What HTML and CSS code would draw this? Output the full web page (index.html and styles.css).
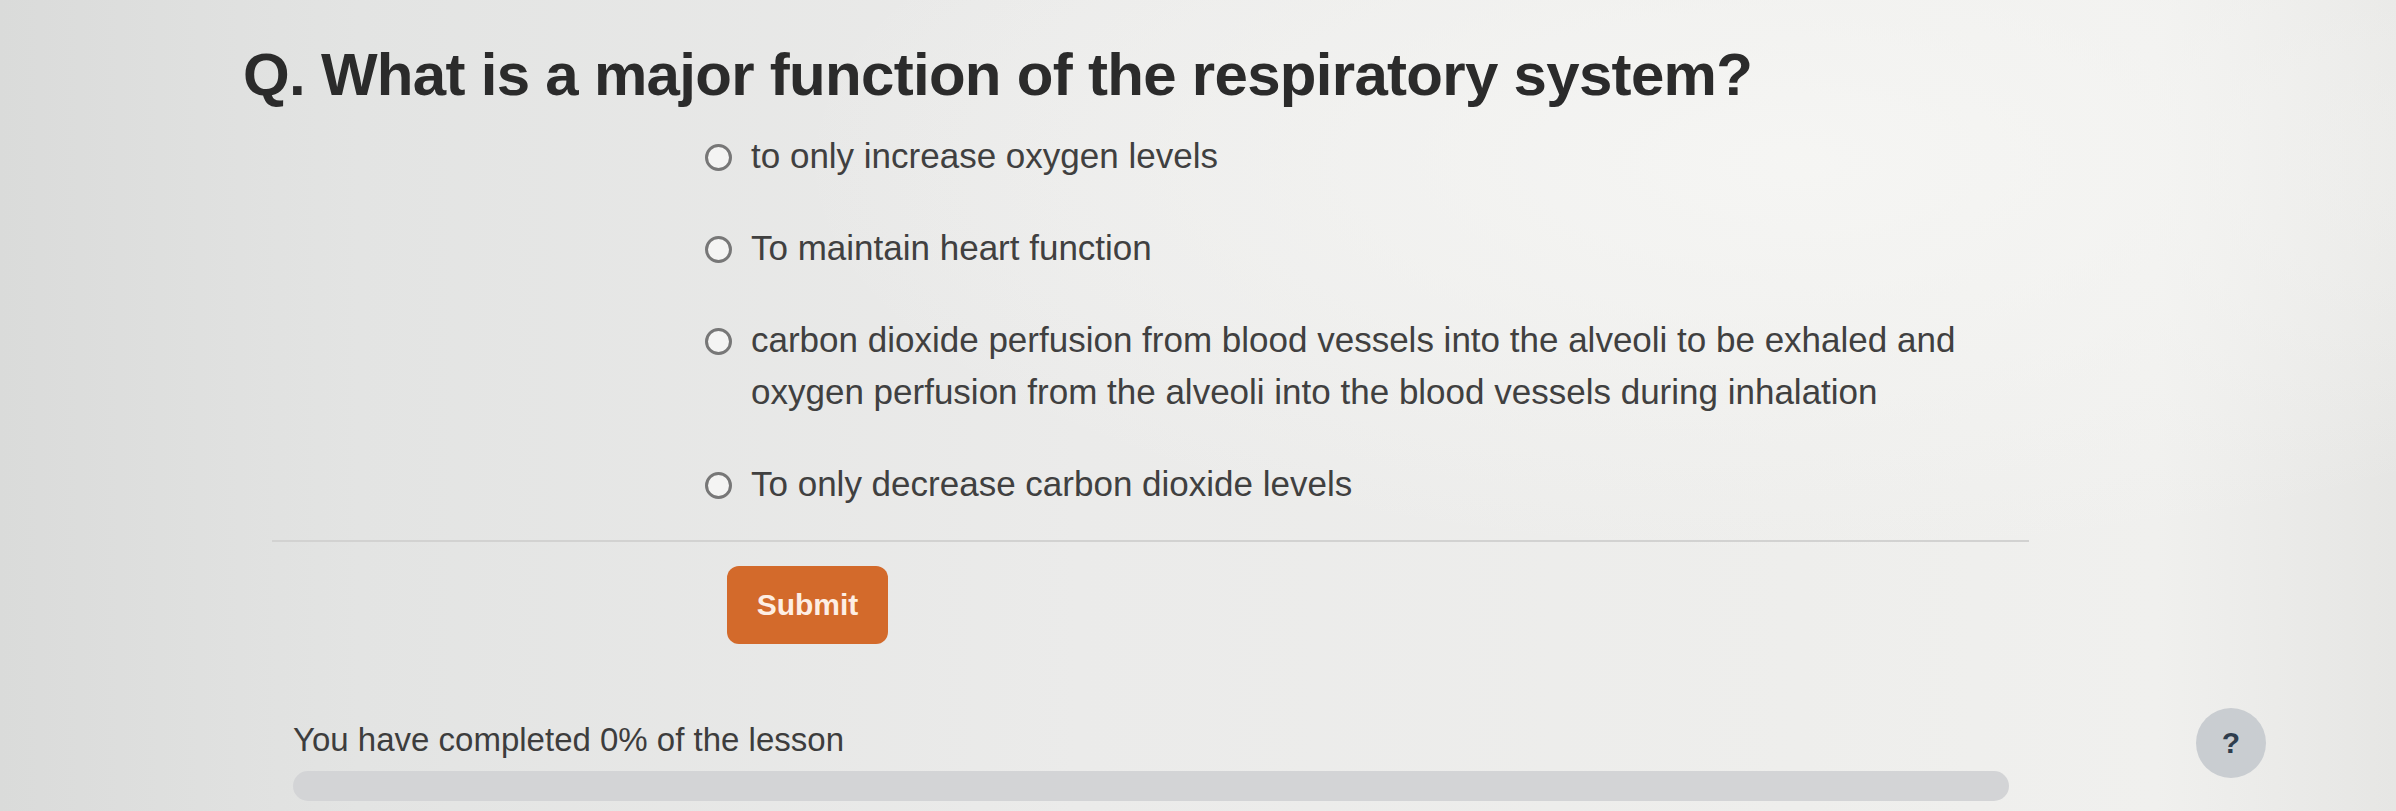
FILE: index.html
```html
<!DOCTYPE html>
<html lang="en">
<head>
<meta charset="utf-8">
<title>Quiz</title>
<link rel="stylesheet" href="styles.css">
</head>
<body>
<main class="quiz">
  <h1 class="question">Q. What is a major function of the respiratory system?</h1>
  <ul class="options">
    <li class="option"><span class="radio"></span><span class="label">to only increase oxygen levels</span></li>
    <li class="option"><span class="radio"></span><span class="label">To maintain heart function</span></li>
    <li class="option"><span class="radio"></span><span class="label">carbon dioxide perfusion from blood vessels into the alveoli to be exhaled and oxygen perfusion from the alveoli into the blood vessels during inhalation</span></li>
    <li class="option"><span class="radio"></span><span class="label">To only decrease carbon dioxide levels</span></li>
  </ul>
  <hr class="divider">
  <button class="submit" type="button">Submit</button>
  <footer class="progress">
    <div class="progress-info">
      <p class="progress-text">You have completed 0% of the lesson</p>
      <div class="progress-track"></div>
    </div>
    <button class="help" type="button">?</button>
  </footer>
</main>
</body>
</html>
```

FILE: styles.css
```css
html, body {
  margin: 0;
  padding: 0;
  height: 100%;
  overflow: hidden;
}

body {
  font-family: "Liberation Sans", Arial, sans-serif;
  color: #3a3a3a;
  background:
    radial-gradient(ellipse 60% 70% at 75% 20%, rgba(246, 246, 244, 0.9), rgba(246, 246, 244, 0) 70%),
    linear-gradient(90deg, #dadbda 0%, #e3e4e3 15%, #ebebea 45%, #eeeeec 75%, #f0f0ee 90%, #e6e6e4 100%);
}

.quiz {
  padding-top: 40px;
}

.question {
  margin: 0 0 0 243px;
  font-size: 60px;
  line-height: 70px;
  font-weight: 700;
  letter-spacing: -0.7px;
  color: #2b2b2b;
}

.options {
  list-style: none;
  margin: 20px 0 0 705px;
  padding: 0;
  display: flex;
  flex-direction: column;
  gap: 40px;
}

.option {
  display: flex;
  align-items: flex-start;
  gap: 19px;
}

.radio {
  flex: none;
  box-sizing: border-box;
  width: 27px;
  height: 27px;
  margin-top: 14px;
  border: 3px solid #777777;
  border-radius: 50%;
  background: #f4f4f3;
}

.label {
  font-size: 35px;
  line-height: 52px;
  color: #404040;
  max-width: 1290px;
}

.divider {
  margin: 30px 0 0 272px;
  width: 1757px;
  border: 0;
  height: 2px;
  background: #d2d2d1;
}

.submit {
  display: block;
  margin: 24px 0 0 727px;
  width: 161px;
  height: 78px;
  border: 0;
  border-radius: 12px;
  background: #d36a2b;
  color: #fdeee4;
  font-family: "Liberation Sans", Arial, sans-serif;
  font-size: 30px;
  font-weight: 700;
  padding: 0;
}

.progress {
  display: flex;
  align-items: flex-start;
  margin-top: 62px;
  padding-left: 293px;
}

.progress-info {
  width: 1716px;
  padding-top: 14px;
}

.progress-text {
  margin: 0;
  font-size: 33px;
  line-height: 40px;
  color: #3d3d3d;
}

.progress-track {
  margin-top: 11px;
  height: 30px;
  border-radius: 15px;
  background: #d3d4d6;
}

.help {
  flex: none;
  margin-left: 187px;
  margin-top: 2px;
  width: 70px;
  height: 70px;
  border: 0;
  border-radius: 50%;
  background: #c9cdd1;
  color: #2f3e4e;
  font-family: "Liberation Sans", Arial, sans-serif;
  font-size: 30px;
  font-weight: 700;
  padding: 0;
}
```
